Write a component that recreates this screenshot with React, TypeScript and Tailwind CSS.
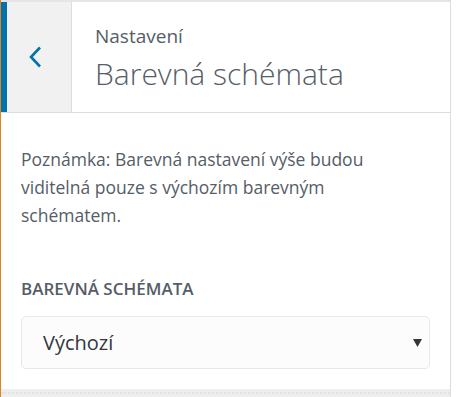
import React from "react";

const App = () => {
  return (
    <div className="w-[459px] h-[397px] bg-white flex font-['Open_Sans',sans-serif] text-[#555d66]">
      <div className="w-[451px] h-full flex flex-col border-l border-l-[#e0822a] border-r border-r-[#dddddd]">
        {/* top strip */}
        <div className="h-[2px] bg-[#e5e5e5]" />

        {/* header */}
        <div className="h-[111px] flex border-b border-[#dddddd]">
          <div className="w-[6px] bg-[#0073aa]" />
          <button className="w-[65px] bg-[#f1f1f1] border-r border-[#dddddd] flex items-center justify-center">
            <svg width="16" height="24" viewBox="0 0 16 24" className="ml-[-6px]">
              <path d="M12 2.5 L3 12 L12 21.5" fill="none" stroke="#0073aa" strokeWidth="2.6" />
            </svg>
          </button>
          <div className="flex-1 pl-[23px] pt-[22px]">
            <div className="text-[19px] leading-[24px]">Nastavení</div>
            <h2 className="mt-[7px] text-[30px] leading-[38px] font-light">Barevná schémata</h2>
          </div>
        </div>

        {/* content */}
        <div className="flex-1 px-[20px] pt-[32px]">
          <p className="text-[17.5px] leading-[28px] pr-[40px]">
            Poznámka: Barevná nastavení výše budou viditelná pouze s výchozím barevným schématem.
          </p>
          <div className="mt-[48px] text-[17px] leading-[24px] font-semibold uppercase">Barevná schémata</div>
          <div className="mt-[15px] h-[53px] rounded-[5px] border border-[#e8e8e8] bg-[#fcfcfc] flex items-center justify-between pl-[21px] pr-[9px]">
            <span className="text-[20px] text-[#32373c]">Výchozí</span>
            <svg width="9" height="8" viewBox="0 0 9 8" className="translate-x-[2px]">
              <path d="M0 0 H9 L4.5 8 Z" fill="#32373c" />
            </svg>
          </div>
        </div>

        {/* bottom strip */}
        <div className="h-[8px] bg-[#eeeeee] flex items-center">
          <div className="w-full border-t-2 border-dotted border-[#e2e2e2]" />
        </div>
      </div>
    </div>
  );
};

export default App;
